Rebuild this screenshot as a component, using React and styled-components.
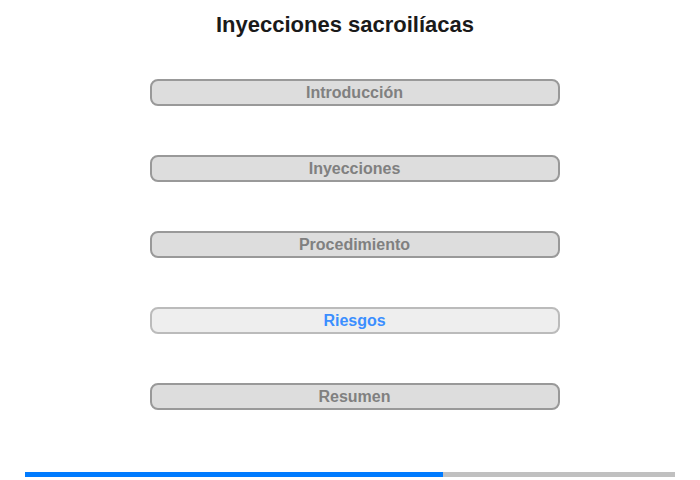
import React from "react";
import styled, { createGlobalStyle } from "styled-components";

const GlobalStyle = createGlobalStyle`
  body {
    margin: 0;
    background: #fff;
    font-family: "Liberation Sans", Arial, sans-serif;
  }
`;

const Page = styled.div`
  width: 700px;
  height: 480px;
  display: flex;
  flex-direction: column;
  align-items: center;
`;

const Title = styled.h1`
  margin: 12px 0 0;
  font-size: 22px;
  font-weight: bold;
  color: #1a1a1a;
  line-height: 25px;
  transform: translateX(-5px);
`;

const Menu = styled.div`
  display: flex;
  flex-direction: column;
  gap: 49px;
  margin-top: 42px;
  margin-left: 9px;
`;

const Item = styled.div`
  box-sizing: border-box;
  width: 410px;
  height: 27px;
  border: 2px solid ${(p) => (p.active ? "#bbb" : "#999")};
  border-radius: 8px;
  background: ${(p) => (p.active ? "#eee" : "#ddd")};
  color: ${(p) => (p.active ? "#3b8eff" : "#808080")};
  font-size: 16px;
  font-weight: bold;
  display: flex;
  align-items: center;
  justify-content: center;
  cursor: pointer;
`;

const Progress = styled.div`
  margin-top: auto;
  margin-bottom: 3px;
  width: 650px;
  height: 5px;
  background: #c0c0c0;
  display: flex;
`;

const Fill = styled.div`
  height: 100%;
  background: #007bff;
`;

const items = ["Introducción", "Inyecciones", "Procedimiento", "Riesgos", "Resumen"];

const App = () => {
  return (
    <>
      <GlobalStyle />
      <Page>
        <Title>Inyecciones sacroilíacas</Title>
        <Menu>
          {items.map((item) => (
            <Item key={item} active={item === "Riesgos"}>
              {item}
            </Item>
          ))}
        </Menu>
        <Progress>
          <Fill style={{ width: `${(418 / 650) * 100}%` }} />
        </Progress>
      </Page>
    </>
  );
};

export default App;
